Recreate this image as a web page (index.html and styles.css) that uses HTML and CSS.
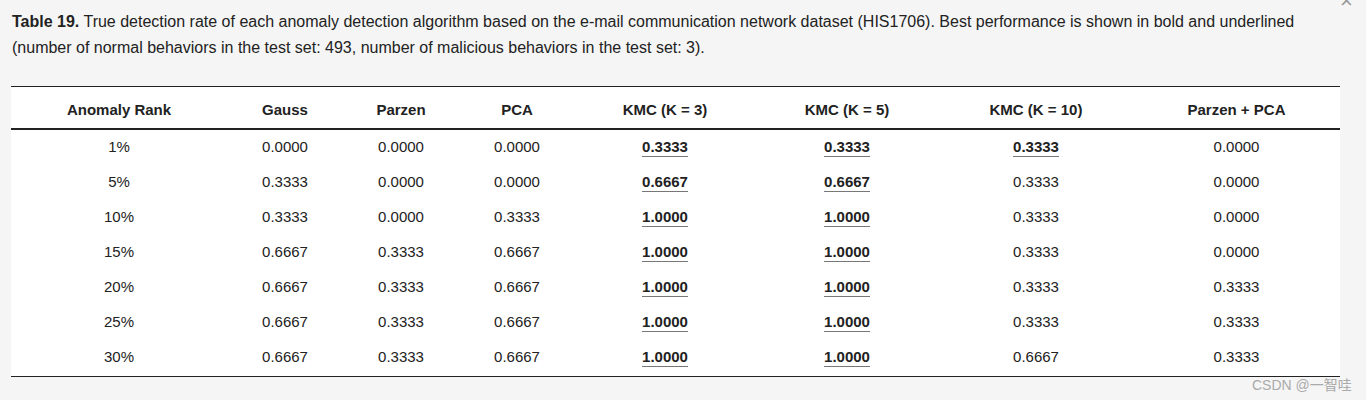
FILE: index.html
```html
<!DOCTYPE html>
<html>
<head>
<meta charset="utf-8">
<link rel="stylesheet" href="styles.css">
</head>
<body>
<div class="page">
  <span class="close">×</span>
  <p class="caption"><b>Table 19.</b> True detection rate of each anomaly detection algorithm based on the e-mail communication network dataset (HIS1706). Best performance is shown in bold and underlined (number of normal behaviors in the test set: 493, number of malicious behaviors in the test set: 3).</p>
  <table class="data">
    <colgroup>
      <col class="c1"><col class="c2"><col class="c3"><col class="c4"><col class="c5"><col class="c6"><col class="c7"><col class="c8">
    </colgroup>
    <thead>
      <tr><th>Anomaly Rank</th><th>Gauss</th><th>Parzen</th><th>PCA</th><th>KMC (K = 3)</th><th>KMC (K = 5)</th><th>KMC (K = 10)</th><th>Parzen + PCA</th></tr>
    </thead>
    <tbody>
      <tr><td>1%</td><td>0.0000</td><td>0.0000</td><td>0.0000</td><td><span class="best">0.3333</span></td><td><span class="best">0.3333</span></td><td><span class="best">0.3333</span></td><td>0.0000</td></tr>
      <tr><td>5%</td><td>0.3333</td><td>0.0000</td><td>0.0000</td><td><span class="best">0.6667</span></td><td><span class="best">0.6667</span></td><td>0.3333</td><td>0.0000</td></tr>
      <tr><td>10%</td><td>0.3333</td><td>0.0000</td><td>0.3333</td><td><span class="best">1.0000</span></td><td><span class="best">1.0000</span></td><td>0.3333</td><td>0.0000</td></tr>
      <tr><td>15%</td><td>0.6667</td><td>0.3333</td><td>0.6667</td><td><span class="best">1.0000</span></td><td><span class="best">1.0000</span></td><td>0.3333</td><td>0.0000</td></tr>
      <tr><td>20%</td><td>0.6667</td><td>0.3333</td><td>0.6667</td><td><span class="best">1.0000</span></td><td><span class="best">1.0000</span></td><td>0.3333</td><td>0.3333</td></tr>
      <tr><td>25%</td><td>0.6667</td><td>0.3333</td><td>0.6667</td><td><span class="best">1.0000</span></td><td><span class="best">1.0000</span></td><td>0.3333</td><td>0.3333</td></tr>
      <tr><td>30%</td><td>0.6667</td><td>0.3333</td><td>0.6667</td><td><span class="best">1.0000</span></td><td><span class="best">1.0000</span></td><td>0.6667</td><td>0.3333</td></tr>
    </tbody>
  </table>
  <div class="watermark">CSDN @一智哇</div>
</div>
</body>
</html>
```
FILE: styles.css
```css
html, body {
  margin: 0;
  padding: 0;
  background: #f5f5f5;
}
body {
  font-family: "Liberation Sans", Arial, sans-serif;
  color: #222;
}
.page {
  position: relative;
  width: 1366px;
  height: 400px;
  overflow: hidden;
  padding: 0 0 0 11px;
  box-sizing: border-box;
}
.close {
  position: absolute;
  top: -10px;
  left: 1340px;
  font-size: 22px;
  color: #999;
  line-height: 1;
}
.caption {
  margin: 0;
  padding: 9px 0 0 1px;
  width: 1330px;
  font-size: 16px;
  line-height: 26px;
  color: #222;
}
.data {
  margin-top: 25px;
  width: 1329px;
  border-collapse: collapse;
  background: #fff;
  table-layout: fixed;
  font-size: 15px;
}
.c1 { width: 216px; }
.c2 { width: 116px; }
.c3 { width: 116px; }
.c4 { width: 116px; }
.c5 { width: 180px; }
.c6 { width: 184px; }
.c7 { width: 194px; }
.c8 { width: 207px; }
.data thead tr {
  border-top: 1px solid #222;
  border-bottom: 2px solid #222;
}
.data th {
  height: 42px;
  padding: 5px 0 0;
  box-sizing: border-box;
  font-weight: bold;
  font-size: 15px;
  text-align: center;
  vertical-align: middle;
  color: #222;
}
.data td {
  height: 35px;
  padding: 0;
  text-align: center;
  vertical-align: middle;
  color: #222;
}
.data tbody tr:first-child td {
  height: 34px;
}
.data tbody tr:last-child td {
  height: 36px;
  padding-bottom: 1px;
}
.data tbody tr:last-child {
  border-bottom: 1px solid #222;
}
.best {
  font-weight: bold;
  border-bottom: 1px solid #777;
  padding-bottom: 1px;
}
.watermark {
  position: absolute;
  left: 1252px;
  top: 374px;
  font-size: 14px;
  color: #aaa;
  font-family: "Liberation Sans", "Noto Sans CJK SC", sans-serif;
}
```
